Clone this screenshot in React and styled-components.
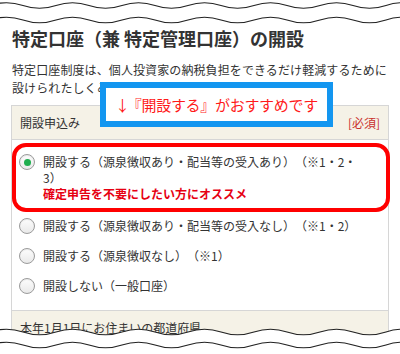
import styled, { createGlobalStyle } from "styled-components";

const GlobalStyle = createGlobalStyle`
  html, body {
    margin: 0;
    padding: 0;
    background: #fff;
  }
  body {
    font-family: "Noto Sans CJK JP", "Noto Sans", sans-serif;
    color: #333;
    text-spacing-trim: space-all;
  }
`;

const Page = styled.div`
  position: relative;
  width: 400px;
  height: 354px;
  overflow: hidden;
  background: #fff;
`;

const TopTear = styled.svg`
  display: block;
  width: 400px;
  height: 26px;
`;

const BottomTear = styled.svg`
  position: absolute;
  left: 0;
  bottom: 0;
  width: 400px;
  height: 30px;
`;

const Title = styled.h2`
  margin: 0;
  padding: 0 12px;
  font-size: 18px;
  line-height: 24px;
  font-weight: 700;
  color: #333;
`;

const Lead = styled.p`
  margin: 11px 0 0;
  padding: 0 12px;
  font-size: 12px;
  line-height: 18px;
  letter-spacing: 0.1px;
`;

const Panel = styled.div`
  margin: 8px 11px 0;
  border: 1px solid #d6d6d6;
`;

const PanelHead = styled.div`
  display: flex;
  align-items: center;
  justify-content: space-between;
  height: 33px;
  padding: 0 8px;
  background: #f5f2e7;
  border-bottom: 1px solid #d6d6d6;
  font-size: 12px;
`;

const Required = styled.span`
  color: #c9302c;
`;

const Options = styled.div`
  padding: 7px 0 9px;
  background: #fff;
`;

const Option = styled.label`
  position: relative;
  display: flex;
  align-items: flex-start;
  gap: 8px;
  padding: 7px 0 ${(p) => (p.$tall ? 9 : 7)}px 7px;
  font-size: 12px;
  line-height: 16px;

  ${(p) =>
    p.$highlight &&
    `
    &::before {
      content: "";
      position: absolute;
      left: 0px;
      right: -2px;
      top: -4px;
      bottom: -1px;
      border: 4.5px solid #f00;
      border-radius: 14px;
      pointer-events: none;
    }
  `}
`;

const Radio = styled.span`
  flex: none;
  position: relative;
  width: 16px;
  height: 16px;
  box-sizing: border-box;
  border-radius: 50%;
  border: 1px solid #9a9a9a;
  background: linear-gradient(#fdfdfd, #e9e9e9);
  box-shadow: inset 0 1px 1px rgba(0, 0, 0, 0.08);

  ${(p) =>
    p.$checked &&
    `
    &::after {
      content: "";
      position: absolute;
      left: 50%;
      top: 50%;
      width: 7px;
      height: 7px;
      margin: -3.5px 0 0 -3.5px;
      border-radius: 50%;
      background: #1fae4f;
    }
  `}
`;

const Note = styled.span`
  display: block;
  color: #e60012;
  font-weight: 700;
`;

const PanelFoot = styled.div`
  padding: 9px 8px 20px;
  background: #f5f2e7;
  border-top: 1px solid #d6d6d6;
  font-size: 12px;
  line-height: 16px;
`;

const Callout = styled.div`
  position: absolute;
  left: 100px;
  top: 82px;
  width: 233px;
  height: 45px;
  box-sizing: border-box;
  border: 6px solid #1396f0;
  background: #fff;
  display: flex;
  align-items: center;
  justify-content: center;
  color: #ff1a1a;
  font-size: 15px;
  letter-spacing: -0.3px;
`;

const Arrow = styled.span`
  margin-right: -3px;
`;

const wave = (y, amp, period, width, phase = 0) => {
  const half = period / 2;
  let d = `M${-phase} ${y} Q${-phase + half / 2} ${y - amp * 2} ${-phase + half} ${y}`;
  for (let x = -phase + period; x <= width + period; x += half) {
    d += ` T${x} ${y}`;
  }
  return d;
};

const options = [
  { label: "開設する（源泉徴収あり・配当等の受入なし）（※1・2）" },
  { label: "開設する（源泉徴収なし）（※1）" },
  { label: "開設しない（一般口座）" },
];

const App = () => {
  return (
    <Page>
      <GlobalStyle />
      <TopTear viewBox="0 0 400 26">
        <path d={wave(5.5, 2.8, 66, 400, 10)} fill="none" stroke="#222" strokeWidth="1.1" />
        <path d={wave(20, 2.8, 66, 400, 10)} fill="none" stroke="#222" strokeWidth="1.1" />
      </TopTear>

      <Title>特定口座（兼 特定管理口座）の開設</Title>
      <Lead>
        特定口座制度は、個人投資家の納税負担をできるだけ軽減するために
        <br />
        設けられたしくみです。
      </Lead>

      <Panel>
        <PanelHead>
          <span>開設申込み</span>
          <Required>[必須]</Required>
        </PanelHead>
        <Options>
          <Option $highlight $tall>
            <Radio $checked />
            <span>
              開設する（源泉徴収あり・配当等の受入あり）（※1・2・
              <br />
              3）
              <Note>確定申告を不要にしたい方にオススメ</Note>
            </span>
          </Option>
          {options.map((o) => (
            <Option key={o.label}>
              <Radio />
              <span>{o.label}</span>
            </Option>
          ))}
        </Options>
        <PanelFoot>本年1月1日にお住まいの都道府県</PanelFoot>
      </Panel>

      <Callout>
        <Arrow>↓</Arrow>『開設する』がおすすめです
      </Callout>

      <BottomTear viewBox="0 0 400 30">
        <path d={`${wave(8, 2.8, 66, 400, 10)} L466 30 L-20 30 Z`} fill="#fff" stroke="none" />
        <path d={wave(8, 2.8, 66, 400, 10)} fill="none" stroke="#222" strokeWidth="1.1" />
        <path d={wave(21, 2.8, 66, 400, 10)} fill="none" stroke="#222" strokeWidth="1.1" />
      </BottomTear>
    </Page>
  );
};

export default App;
